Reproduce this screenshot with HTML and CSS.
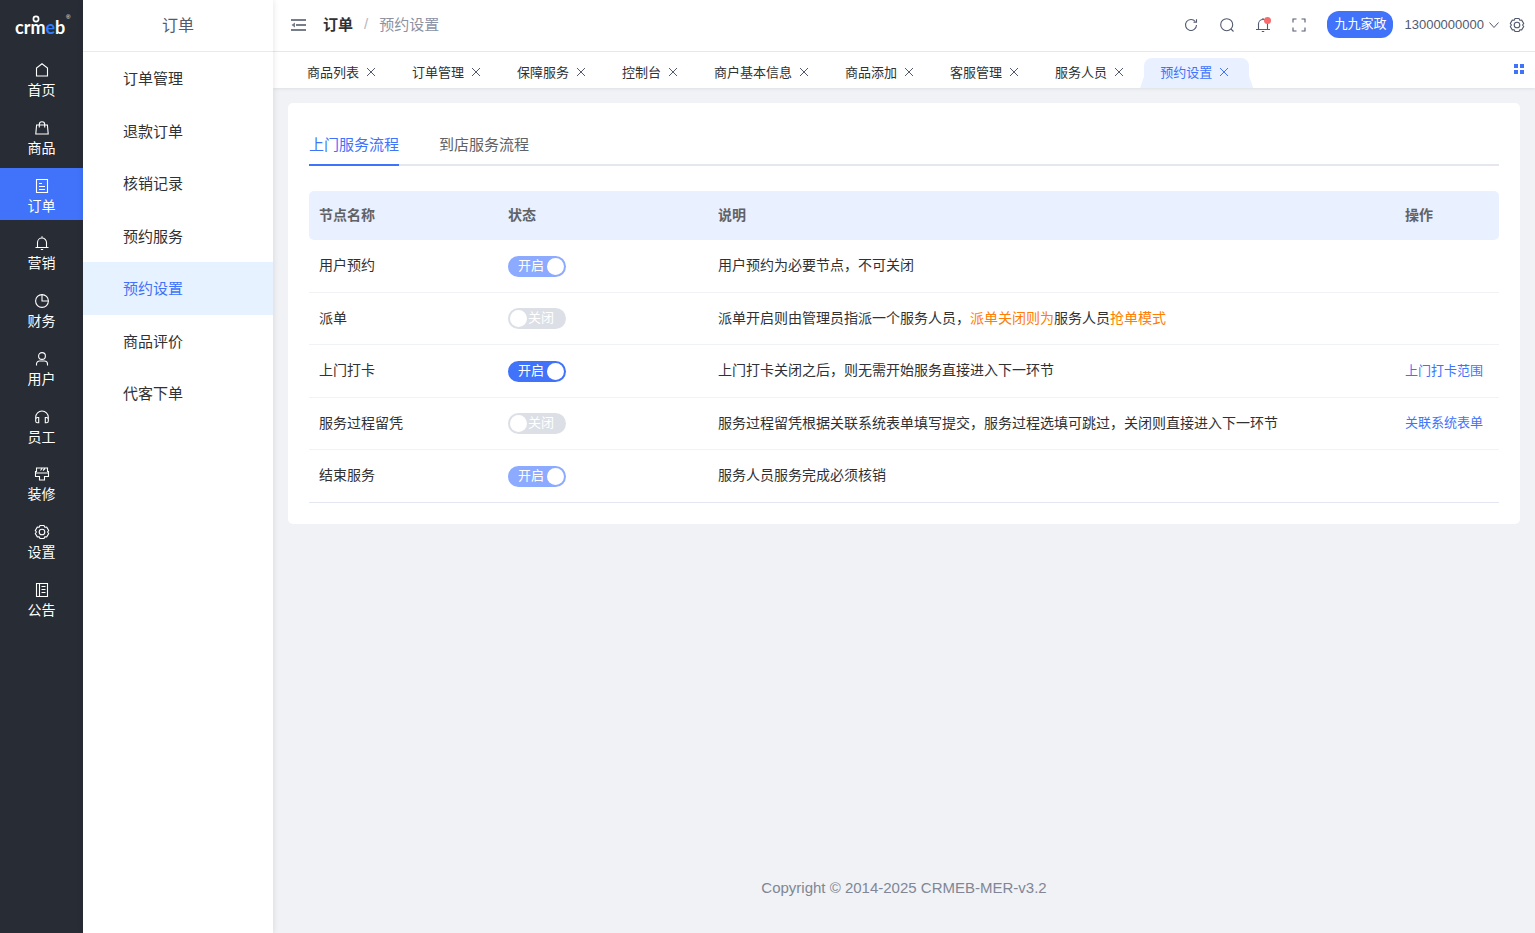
FILE: index.html
```html
<!DOCTYPE html>
<html lang="zh-CN">
<head>
    <meta charset="UTF-8">
    <meta name="viewport" content="width=device-width, initial-scale=1.0">
    <title>预约设置</title>
    <link rel="stylesheet" href="styles.css">
</head>
<body>
    <div class="layout">
        <!-- Main menu -->
        <aside class="sidebar">
            <a href="#" class="logo">
                <svg viewBox="0 0 60 30" width="60" height="30">
                    <text x="3" y="24" class="logo-text">crm<tspan class="logo-e">e</tspan>b</text>
                    <circle cx="24" cy="9" r="2.6" class="logo-dot"/>
                    <text x="54" y="9" class="logo-mark">®</text>
                </svg>
            </a>
            <nav class="nav">
                <a href="#" class="nav-item">
                    <svg viewBox="0 0 16 16" class="icon"><path d="M2.5 14V6L8 1.8 13.5 6V14z"/></svg>
                    <span>首页</span>
                </a>
                <a href="#" class="nav-item">
                    <svg viewBox="0 0 16 16" class="icon"><path d="M2.6 5h10.8l.8 9H1.8zM5.3 7.5V4.5a2.7 2.7 0 0 1 5.4 0v3"/></svg>
                    <span>商品</span>
                </a>
                <a href="#" class="nav-item active">
                    <svg viewBox="0 0 16 16" class="icon"><path d="M2.5 1.5h11v13h-11zM5 5.5h3M5 8.5h6M5 11.5h6"/></svg>
                    <span>订单</span>
                </a>
                <a href="#" class="nav-item">
                    <svg viewBox="0 0 16 16" class="icon"><path d="M1.5 12.5h13M3.5 12.5V7.5a4.5 4.5 0 0 1 9 0v5M8 1.3V3M6.8 14.5h2.4"/></svg>
                    <span>营销</span>
                </a>
                <a href="#" class="nav-item">
                    <svg viewBox="0 0 16 16" class="icon"><circle cx="8" cy="8" r="6.4"/><path d="M8 1.6V8h6.4"/></svg>
                    <span>财务</span>
                </a>
                <a href="#" class="nav-item">
                    <svg viewBox="0 0 16 16" class="icon"><circle cx="8" cy="5" r="3.4"/><path d="M2.5 14.5v-1.5a3 3 0 0 1 3-3h5a3 3 0 0 1 3 3v1.5"/></svg>
                    <span>用户</span>
                </a>
                <a href="#" class="nav-item">
                    <svg viewBox="0 0 16 16" class="icon"><path d="M1.7 11V8.3a6.3 6.3 0 0 1 12.6 0V11M4.7 8.5v5.2H3.5a1.8 1.8 0 0 1-1.8-1.8V10.3a1.8 1.8 0 0 1 1.8-1.8zM11.3 8.5v5.2h1.2a1.8 1.8 0 0 0 1.8-1.8V10.3a1.8 1.8 0 0 0-1.8-1.8z"/></svg>
                    <span>员工</span>
                </a>
                <a href="#" class="nav-item">
                    <svg viewBox="0 0 16 16" class="icon"><path d="M2.5 2h11v3.5h1v5h-4V14h-5v-3.5h-4v-5h1zM1.5 7h13M6.5 4.5l1.5-2M9 4.5l2-2"/></svg>
                    <span>装修</span>
                </a>
                <a href="#" class="nav-item">
                    <svg viewBox="0 0 16 16" class="icon"><path d="M5.2 3.2L6 1.5h4l.8 1.7 1.9-.1 2 3.4L13.6 8l1.1 1.5-2 3.4-1.9-.1L10 14.500H6l-.8-1.7-1.9.1-2-3.4L2.4 8 1.3 6.5l2-3.4z"/><circle cx="8" cy="8" r="2.8"/></svg>
                    <span>设置</span>
                </a>
                <a href="#" class="nav-item">
                    <svg viewBox="0 0 16 16" class="icon"><path d="M2.5 1.5h11v13h-11zM5.5 1.5v13M7.5 4.5h4M7.5 7.5h4M7.5 10.5h4"/></svg>
                    <span>公告</span>
                </a>
            </nav>
        </aside>

        <!-- Second level menu -->
        <aside class="submenu">
            <div class="submenu-title">订单</div>
            <nav class="submenu-list">
                <a href="#">订单管理</a>
                <a href="#">退款订单</a>
                <a href="#">核销记录</a>
                <a href="#">预约服务</a>
                <a href="#" class="active">预约设置</a>
                <a href="#">商品评价</a>
                <a href="#">代客下单</a>
            </nav>
        </aside>

        <div class="main">
            <header class="header">
                <button type="button" aria-label="收起菜单">
                    <svg viewBox="0 0 15 12" class="fold-icon"><path d="M0 0h15v2H0zM5 5h10v2H5zM0 10h15v2H0zM4 3.500v5L.5 6z"/></svg>
                </button>
                <div class="breadcrumb">
                    <a href="#">订单</a>
                    <span class="separator">/</span>
                    <span>预约设置</span>
                </div>
                <div class="tools">
                    <button type="button" aria-label="刷新">
                        <svg viewBox="0 0 16 16" class="icon"><path d="M13.5 8A5.5 5.5 0 1 1 12.3 4.5M13.5 2.3V5.2H10.5"/></svg>
                    </button>
                    <button type="button" aria-label="搜索">
                        <svg viewBox="0 0 16 16" class="icon"><circle cx="7.7" cy="7.7" r="6"/><path d="M12 12l2.5 2.5"/></svg>
                    </button>
                    <button type="button" class="notice" aria-label="消息">
                        <svg viewBox="0 0 16 16" class="icon"><path d="M1 12.5h14M3.5 12.5V7a4.5 4.5 0 0 1 9 0v5.5M8 1v1.5M6.8 14.5h2.4"/></svg>
                    </button>
                    <button type="button" aria-label="全屏">
                        <svg viewBox="0 0 16 16" class="icon"><path d="M2 5.5V2h3.5M10.5 2H14v3.5M14 10.5V14h-3.5M5.5 14H2v-3.5"/></svg>
                    </button>
                </div>
                <a href="#" class="shop">九九家政</a>
                <button type="button" class="user">
                    13000000000
                    <svg viewBox="0 0 12 12" class="icon small"><path d="M1.5 3.5L6 8.5l4.5-5"/></svg>
                </button>
                <button type="button" aria-label="设置">
                    <svg viewBox="0 0 16 16" class="icon"><path d="M5.2 3.2L6 1.5h4l.8 1.7 1.9-.1 2 3.4L13.6 8l1.1 1.5-2 3.4-1.9-.1L10 14.5H6l-.8-1.7-1.9.1-2-3.4L2.4 8 1.3 6.5l2-3.4z"/><circle cx="8" cy="8" r="2.8"/></svg>
                </button>
            </header>

            <!-- Opened pages -->
            <div class="tags">
                <div class="tag"><a href="#">商品列表</a><button type="button" aria-label="关闭商品列表"><svg viewBox="0 0 12 12" class="icon small"><path d="M2 2l8 8M10 2l-8 8"/></svg></button></div>
                <div class="tag"><a href="#">订单管理</a><button type="button" aria-label="关闭订单管理"><svg viewBox="0 0 12 12" class="icon small"><path d="M2 2l8 8M10 2l-8 8"/></svg></button></div>
                <div class="tag"><a href="#">保障服务</a><button type="button" aria-label="关闭保障服务"><svg viewBox="0 0 12 12" class="icon small"><path d="M2 2l8 8M10 2l-8 8"/></svg></button></div>
                <div class="tag"><a href="#">控制台</a><button type="button" aria-label="关闭控制台"><svg viewBox="0 0 12 12" class="icon small"><path d="M2 2l8 8M10 2l-8 8"/></svg></button></div>
                <div class="tag"><a href="#">商户基本信息</a><button type="button" aria-label="关闭商户基本信息"><svg viewBox="0 0 12 12" class="icon small"><path d="M2 2l8 8M10 2l-8 8"/></svg></button></div>
                <div class="tag"><a href="#">商品添加</a><button type="button" aria-label="关闭商品添加"><svg viewBox="0 0 12 12" class="icon small"><path d="M2 2l8 8M10 2l-8 8"/></svg></button></div>
                <div class="tag"><a href="#">客服管理</a><button type="button" aria-label="关闭客服管理"><svg viewBox="0 0 12 12" class="icon small"><path d="M2 2l8 8M10 2l-8 8"/></svg></button></div>
                <div class="tag"><a href="#">服务人员</a><button type="button" aria-label="关闭服务人员"><svg viewBox="0 0 12 12" class="icon small"><path d="M2 2l8 8M10 2l-8 8"/></svg></button></div>
                <div class="tag active"><a href="#">预约设置</a><button type="button" aria-label="关闭预约设置"><svg viewBox="0 0 12 12" class="icon small"><path d="M2 2l8 8M10 2l-8 8"/></svg></button></div>
                <button type="button" class="tags-menu" aria-label="标签操作">
                    <svg viewBox="0 0 12 12"><path d="M1 1h4v4H1zM7 1h4v4H7zM1 7h4v4H1zM7 7h4v4H7z"/></svg>
                </button>
            </div>

            <main class="content">
                <section class="card">
                    <div class="tabs">
                        <button type="button" class="tab active">上门服务流程</button>
                        <button type="button" class="tab">到店服务流程</button>
                    </div>
                    <table class="table">
                        <colgroup>
                            <col class="col-name">
                            <col class="col-status">
                            <col>
                            <col class="col-action">
                        </colgroup>
                        <thead>
                            <tr>
                                <th>节点名称</th>
                                <th>状态</th>
                                <th>说明</th>
                                <th>操作</th>
                            </tr>
                        </thead>
                        <tbody>
                            <tr>
                                <td>用户预约</td>
                                <td class="status"><label class="switch"><input type="checkbox" checked disabled><span>开启</span></label></td>
                                <td>用户预约为必要节点，不可关闭</td>
                                <td></td>
                            </tr>
                            <tr>
                                <td>派单</td>
                                <td class="status"><label class="switch"><input type="checkbox"><span>关闭</span></label></td>
                                <td>派单开启则由管理员指派一个服务人员，<span class="warn">派单关闭则为</span>服务人员<span class="warn">抢单模式</span></td>
                                <td></td>
                            </tr>
                            <tr>
                                <td>上门打卡</td>
                                <td class="status"><label class="switch"><input type="checkbox" checked><span>开启</span></label></td>
                                <td>上门打卡关闭之后，则无需开始服务直接进入下一环节</td>
                                <td><a href="#" class="link">上门打卡范围</a></td>
                            </tr>
                            <tr>
                                <td>服务过程留凭</td>
                                <td class="status"><label class="switch"><input type="checkbox"><span>关闭</span></label></td>
                                <td>服务过程留凭根据关联系统表单填写提交，服务过程选填可跳过，关闭则直接进入下一环节</td>
                                <td><a href="#" class="link">关联系统表单</a></td>
                            </tr>
                            <tr>
                                <td>结束服务</td>
                                <td class="status"><label class="switch"><input type="checkbox" checked disabled><span>开启</span></label></td>
                                <td>服务人员服务完成必须核销</td>
                                <td></td>
                            </tr>
                        </tbody>
                    </table>
                </section>
                <footer class="footer">Copyright © 2014-2025 CRMEB-MER-v3.2</footer>
            </main>
        </div>
    </div>
</body>
</html>
```
FILE: styles.css
```css
* {
    box-sizing: border-box;
}
body {
    margin: 0;
    font-family: "Liberation Sans", "Noto Sans CJK SC", sans-serif;
    font-size: 14px;
    color: #303133;
    background-color: #f0f2f5;
}
a {
    color: inherit;
    text-decoration: none;
}
button {
    border: none;
    padding: 0;
    margin: 0;
    background: none;
    font-family: inherit;
    color: inherit;
    cursor: pointer;
}
svg {
    display: block;
}
.icon {
    width: 16px;
    height: 16px;
    fill: none;
    stroke: currentColor;
    stroke-width: 1.1;
}
.icon.small {
    width: 12px;
    height: 12px;
    stroke-width: 1;
}
.layout {
    display: flex;
    min-height: 100vh;
}

/* Main menu */
.sidebar {
    flex: none;
    width: 83px;
    background-color: #282c34;
    color: #ffffff;
}
.logo {
    display: flex;
    justify-content: center;
    padding: 10px 0 12px;
}
.logo-text {
    font-family: Lato, sans-serif;
    font-size: 18px;
    font-weight: 700;
    fill: #ffffff;
}
.logo-e {
    fill: #2d7cff;
}
.logo-dot {
    fill: none;
    stroke: #ffffff;
    stroke-width: 1.7;
}
.logo-mark {
    font-size: 6px;
    fill: #ffffff;
}
.nav {
    display: flex;
    flex-direction: column;
    justify-content: space-between;
    height: 572px;
}
.nav-item {
    display: flex;
    flex-direction: column;
    align-items: center;
    gap: 2px;
    height: 52px;
    padding-top: 10px;
    line-height: 20px;
}
.nav-item.active {
    background-color: #4073fa;
}

/* Second level menu */
.submenu {
    flex: none;
    width: 190px;
    background-color: #ffffff;
    box-shadow: 0 0 6px rgba(0, 21, 41, 0.12);
    z-index: 1;
}
.submenu-title {
    height: 52px;
    border-bottom: 1px solid #e8eaec;
    line-height: 52px;
    text-align: center;
    font-size: 16px;
    color: #515a6e;
}
.submenu-list a {
    display: block;
    height: 53px;
    padding-left: 40px;
    line-height: 54px;
    font-size: 15px;
}
.submenu-list a:nth-child(even) {
    height: 52px;
}
.submenu-list .active {
    color: #4073fa;
    background-color: #e6f2ff;
}

.main {
    flex: 1;
    min-width: 0;
    display: flex;
    flex-direction: column;
}
.header {
    display: flex;
    align-items: center;
    height: 52px;
    padding: 0 10px 2px 18px;
    border-bottom: 1px solid #e8eaec;
    background-color: #ffffff;
    color: #515a6e;
}
.fold-icon {
    width: 15px;
    height: 12px;
    fill: #767e8c;
}
.breadcrumb {
    display: flex;
    align-items: center;
    gap: 11px;
    margin-left: 17px;
    padding-bottom: 2px;
    font-size: 15px;
    color: #8c92a4;
}
.breadcrumb a {
    font-weight: 700;
    color: #303133;
}
.separator {
    color: #b4b8c2;
}
.tools {
    display: flex;
    gap: 20px;
    margin-left: auto;
}
.notice {
    position: relative;
}
.notice::after {
    content: "";
    position: absolute;
    top: 0;
    right: 0;
    width: 7px;
    height: 7px;
    border-radius: 50%;
    background-color: #f56c6c;
}
.shop {
    height: 27px;
    margin: 0 11px 0 20px;
    padding: 0 7px;
    border-radius: 12px;
    line-height: 26px;
    font-size: 13px;
    color: #ffffff;
    background-color: #4073fa;
}
.user {
    display: flex;
    align-items: center;
    gap: 4px;
    margin-right: 9px;
    font-size: 13px;
}

/* Opened pages */
.tags {
    display: flex;
    align-items: flex-end;
    height: 36px;
    padding: 0 10px 0 18px;
    background-color: #ffffff;
    box-shadow: 0 1px 3px rgba(0, 21, 41, 0.08);
}
.tag {
    display: flex;
    align-items: center;
    gap: 6px;
    height: 30px;
    padding: 0 19px 2px 16px;
    font-size: 13px;
}
.tag a {
    padding-bottom: 2px;
}
.tag .icon {
    color: #515a6e;
}
.tag.active,
.tag.active .icon {
    color: #4073fa;
}
.tag.active {
    position: relative;
    border-radius: 8px 8px 0 0;
    background-color: #e9f0ff;
}
.tag.active::before,
.tag.active::after {
    content: "";
    position: absolute;
    bottom: 0;
    width: 4px;
    height: 12px;
    background-color: #e9f0ff;
}
.tag.active::before {
    left: -4px;
    clip-path: polygon(100% 0, 100% 100%, 0 100%);
}
.tag.active::after {
    right: -4px;
    clip-path: polygon(0 0, 100% 100%, 0 100%);
}
.tags-menu {
    align-self: center;
    margin-left: auto;
    padding-bottom: 2px;
}
.tags-menu svg {
    width: 12px;
    height: 12px;
    fill: #4073fa;
}

.content {
    flex: 1;
    display: flex;
    flex-direction: column;
    justify-content: space-between;
    padding: 15px 15px 37px;
}
.card {
    padding: 21px;
    border-radius: 5px;
    background-color: #ffffff;
}
.tabs {
    display: flex;
    gap: 40px;
    margin-bottom: 25px;
    box-shadow: inset 0 -2px #e4e7ed;
}
.tab {
    height: 42px;
    padding-bottom: 2px;
    border-bottom: 2px solid transparent;
    font-size: 15px;
    color: #606266;
}
.tab.active {
    border-color: #4073fa;
    color: #4073fa;
}

.table {
    width: 100%;
    table-layout: fixed;
    border-collapse: separate;
    border-spacing: 0;
    border-bottom: 1px solid #e4e7f2;
}
.col-name {
    width: 189px;
}
.col-status {
    width: 210px;
}
.col-action {
    width: 104px;
}
.table th {
    height: 49px;
    padding: 0 10px 3px;
    text-align: left;
    font-weight: 700;
    color: #606266;
    background-color: #e9f0ff;
}
.table th:first-child {
    border-radius: 5px 0 0 5px;
}
.table th:last-child {
    border-radius: 0 5px 5px 0;
}
.table td {
    height: 53px;
    padding: 0 10px 4px;
    border-bottom: 1px solid #f0f2f5;
}
.table .status {
    padding-bottom: 0;
}
.table tr:nth-child(even) td {
    height: 52px;
}
.table tbody tr:last-child td {
    height: 52px;
    border-bottom: none;
}
.warn {
    color: #ff7d00;
}
.link {
    font-size: 13px;
    color: #4073fa;
}
.switch {
    display: grid;
    align-items: center;
    width: 58px;
    height: 21px;
    font-size: 13px;
    line-height: 17px;
    color: #ffffff;
}
.switch input,
.switch span {
    grid-area: 1 / 1;
}
.switch input {
    appearance: none;
    display: flex;
    align-items: center;
    width: 58px;
    height: 21px;
    margin: 0;
    padding: 0 2px;
    border-radius: 11px;
    background-color: #dcdfe6;
}
.switch input::before {
    content: "";
    width: 17px;
    height: 17px;
    border-radius: 50%;
    background-color: #ffffff;
}
.switch input:checked {
    justify-content: flex-end;
    background-color: #4073fa;
}
.switch input:disabled {
    background-color: #8caaff;
}
.switch span {
    z-index: 1;
    padding: 0 0 2px 20px;
}
.switch input:checked + span {
    padding-left: 10px;
}
.footer {
    text-align: center;
    font-size: 15px;
    color: #808695;
}
```
